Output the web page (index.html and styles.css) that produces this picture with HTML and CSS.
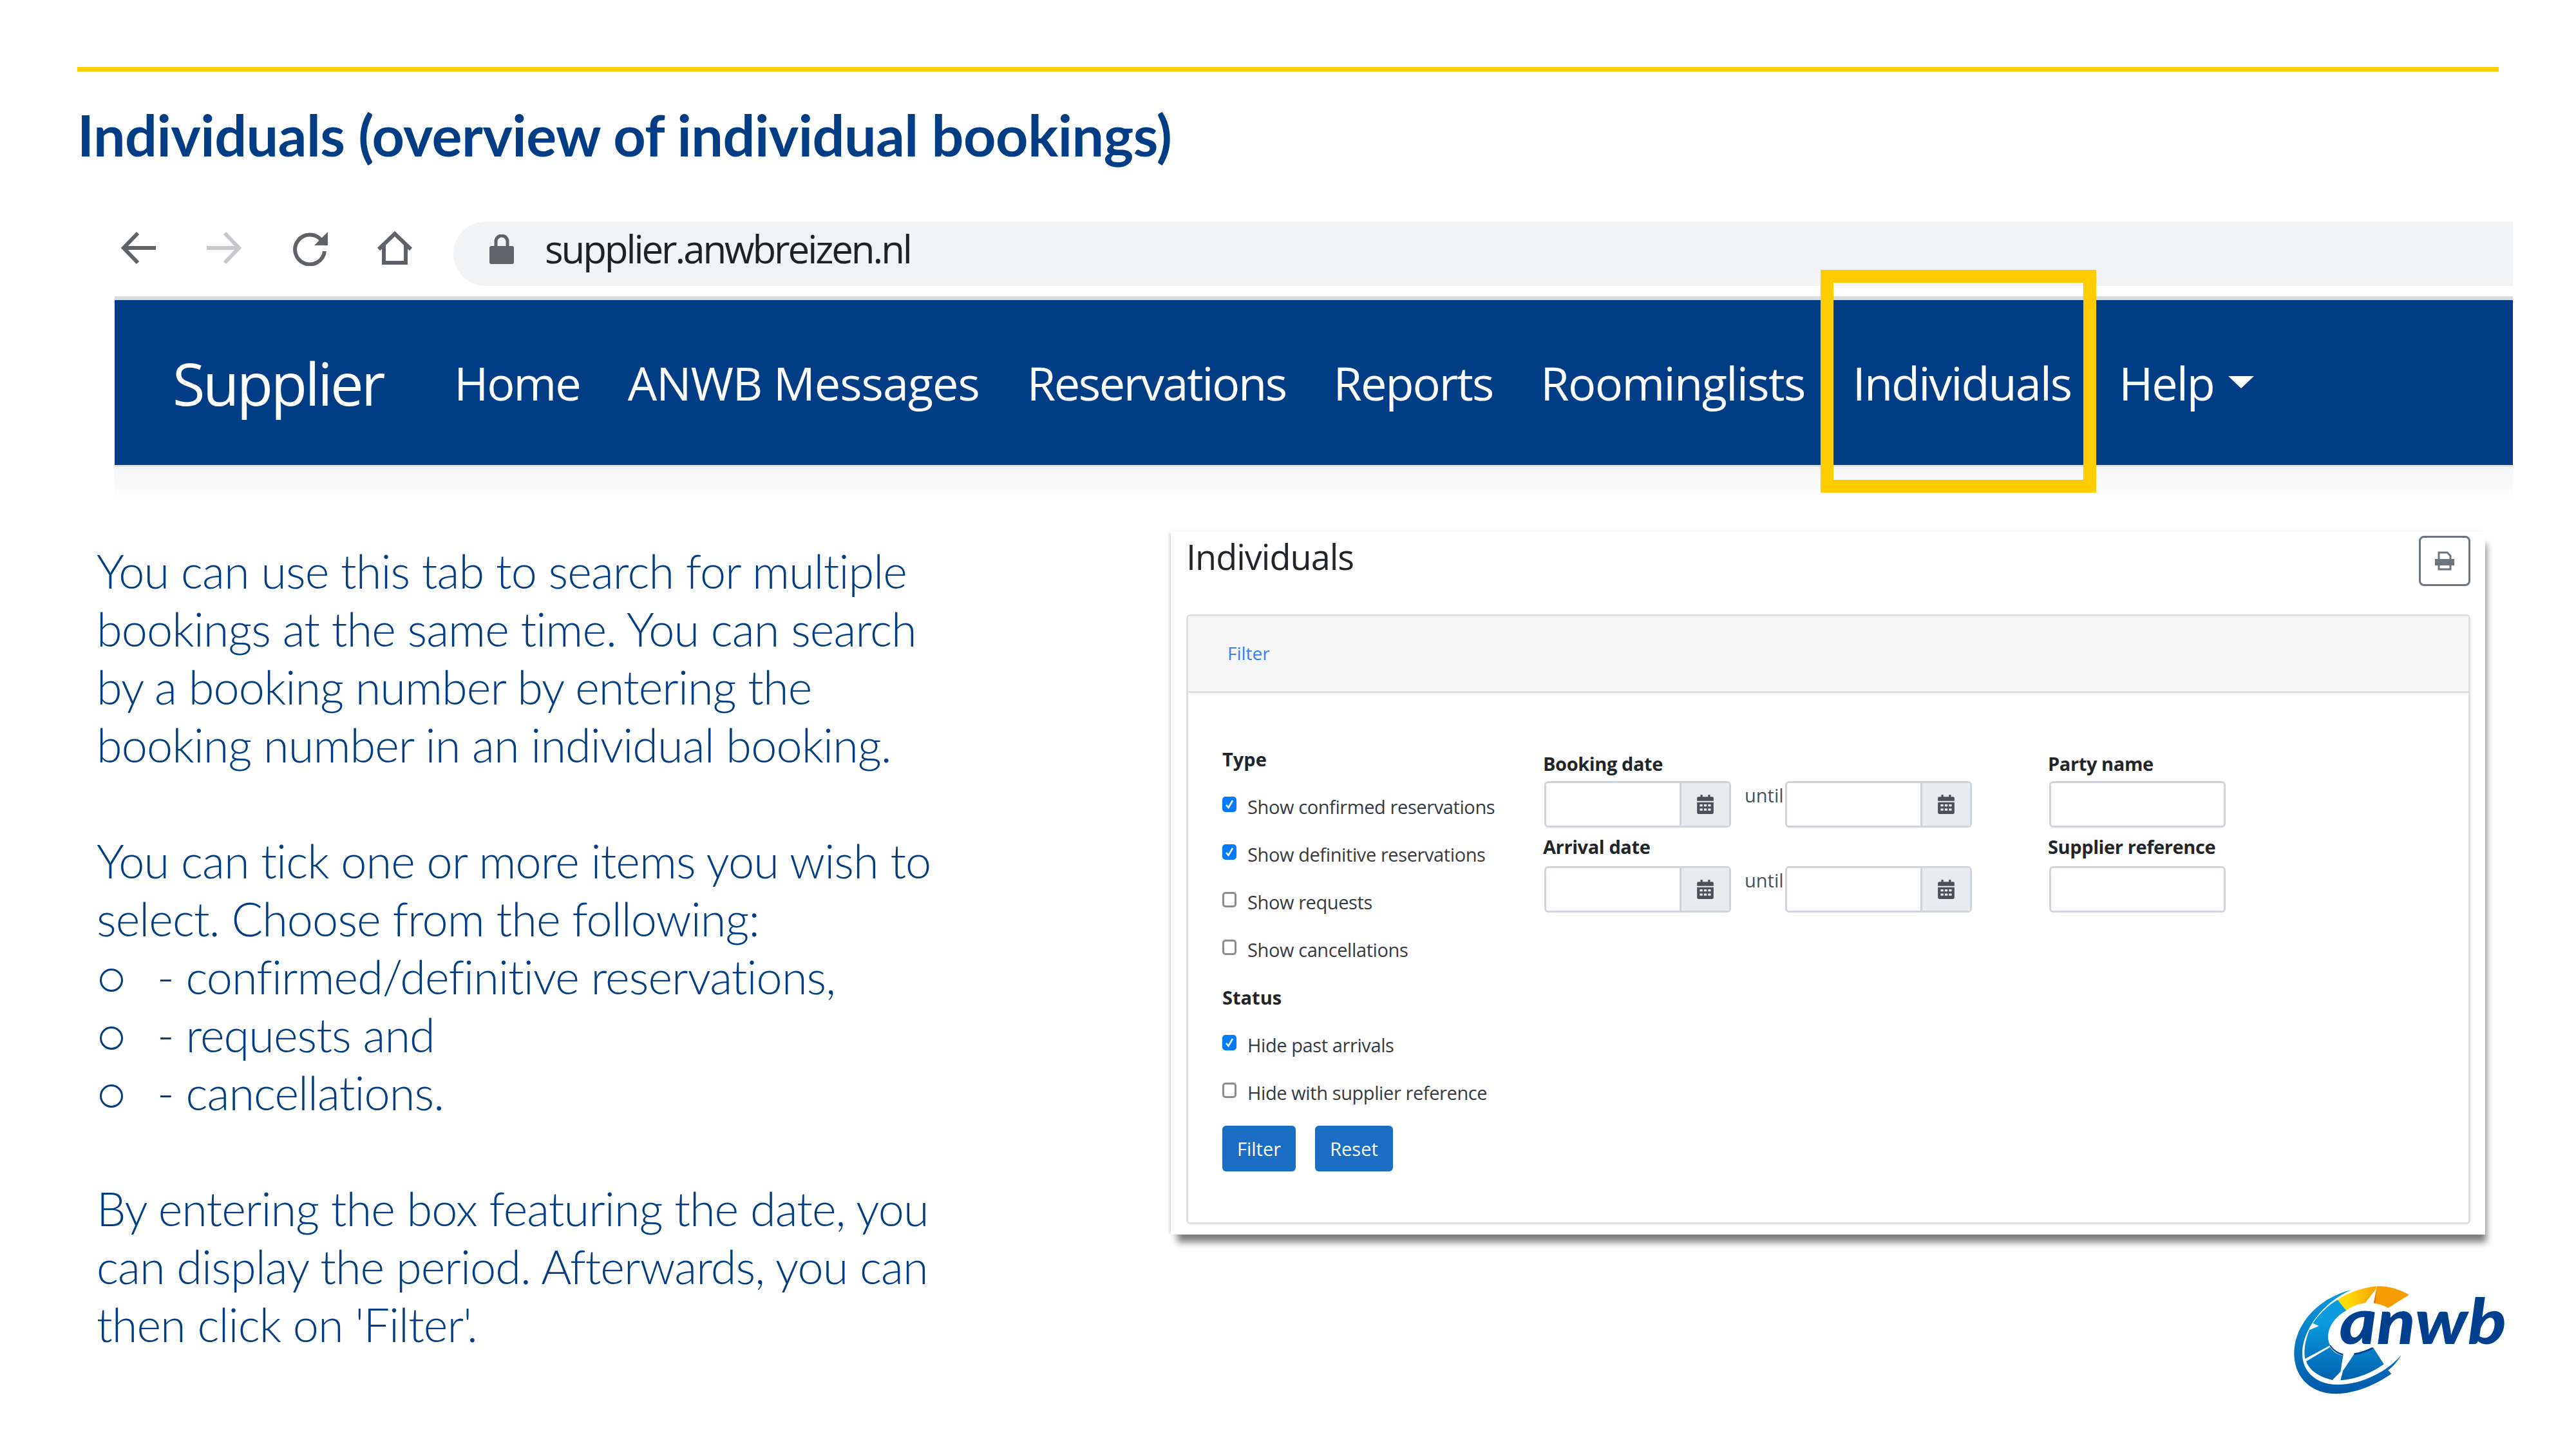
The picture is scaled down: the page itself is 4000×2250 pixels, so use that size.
FILE: index.html
```html
<!DOCTYPE html>
<html lang="en">
<head>
  <meta charset="UTF-8" />
  <title>Individuals</title>
  <link rel="stylesheet" href="styles.css">
</head>
<body>
<div class="slide">
  <div class="rule"></div>
  <h1 class="title">Individuals (overview of individual bookings)</h1>

  <div class="browser">
    <svg class="tool tool-back" viewBox="0 0 56 52"><path d="M54 26H6M26 3L4 26l22 23"/></svg>
    <svg class="tool tool-forward" viewBox="0 0 56 52"><path d="M2 26h48M30 3l22 23-22 23"/></svg>
    <svg class="tool tool-reload" viewBox="0 0 58 56"><path d="M47 16A23 23 0 1 0 52 33"/><path class="solid" d="M57 3v21H36z"/></svg>
    <svg class="tool tool-home" viewBox="0 0 56 52"><path d="M3 28L28 4l25 24M11 22v27h34V22"/></svg>
    <div class="address">
      <svg class="lock" viewBox="0 0 38 46"><path class="lock-body" d="M3 18h32a3 3 0 0 1 3 3v22a3 3 0 0 1-3 3H3a3 3 0 0 1-3-3V21a3 3 0 0 1 3-3z"/><path class="lock-loop" d="M10 19v-8a9 9 0 0 1 18 0v8"/></svg>
      <span class="url">supplier.anwbreizen.nl</span>
    </div>
  </div>

  <nav class="navbar">
    <span class="brand">Supplier</span>
    <a class="nav-link">Home</a>
    <a class="nav-link nav-messages">ANWB Messages</a>
    <a class="nav-link nav-reservations">Reservations</a>
    <a class="nav-link">Reports</a>
    <a class="nav-link nav-rooming">Roominglists</a>
    <a class="nav-link nav-current">Individuals<span class="highlight"></span></a>
    <a class="nav-link">Help<span class="caret"></span></a>
  </nav>
  <div class="nav-shadow"></div>

  <div class="content">
    <div class="copy">
      <p>You can use this tab to search for multiple<br>bookings at the same time. You can search<br>by a booking number by entering the<br>booking number in an individual booking.</p>
      <p>You can tick one or more items you wish to<br>select. Choose from the following:</p>
      <ul>
        <li>- confirmed/definitive reservations,</li>
        <li>- requests and</li>
        <li>- cancellations.</li>
      </ul>
      <p>By entering the box featuring the date, you<br>can display the period. Afterwards, you can<br>then click on 'Filter'.</p>
    </div>

    <section class="panel">
      <div class="panel-head">
        <h2>Individuals</h2>
        <button class="print-btn">
          <svg viewBox="0 0 30 30"><path d="M6 13V2h13l5 5v6"/><path class="solid" d="M0 12h30v10H0z"/><path d="M6 20v8h18v-8"/></svg>
        </button>
      </div>
      <div class="card">
        <div class="card-header"><a>Filter</a></div>
        <div class="card-body">
          <div class="col-checks">
            <h3 class="group-title">Type</h3>
            <label class="check"><input type="checkbox" checked>Show confirmed reservations</label>
            <label class="check"><input type="checkbox" checked>Show definitive reservations</label>
            <label class="check"><input type="checkbox">Show requests</label>
            <label class="check"><input type="checkbox">Show cancellations</label>
            <h3 class="group-title">Status</h3>
            <label class="check"><input type="checkbox" checked>Hide past arrivals</label>
            <label class="check"><input type="checkbox">Hide with supplier reference</label>
            <div class="buttons">
              <button class="btn btn-filter">Filter</button>
              <button class="btn btn-reset">Reset</button>
            </div>
          </div>

          <div class="col-dates">
            <label class="field-label">Booking date</label>
            <div class="date-row">
              <div class="date-input"><span class="cal"><svg viewBox="0 0 24 28"><path d="M5 0h3v4H5zM16 0h3v4h-3z"/><path fill-rule="evenodd" d="M2 3h20a2 2 0 0 1 2 2v4H0V5a2 2 0 0 1 2-2zM0 11h24v15a2 2 0 0 1-2 2H2a2 2 0 0 1-2-2zm4 3v3h4v-3zm6 0v3h4v-3zm6 0v3h4v-3zM4 20v3h4v-3zm6 0v3h4v-3zm6 0v3h4v-3z"/></svg></span></div>
              <span class="until">until</span>
              <div class="date-input"><span class="cal"><svg viewBox="0 0 24 28"><path d="M5 0h3v4H5zM16 0h3v4h-3z"/><path fill-rule="evenodd" d="M2 3h20a2 2 0 0 1 2 2v4H0V5a2 2 0 0 1 2-2zM0 11h24v15a2 2 0 0 1-2 2H2a2 2 0 0 1-2-2zm4 3v3h4v-3zm6 0v3h4v-3zm6 0v3h4v-3zM4 20v3h4v-3zm6 0v3h4v-3zm6 0v3h4v-3z"/></svg></span></div>
            </div>
            <label class="field-label">Arrival date</label>
            <div class="date-row">
              <div class="date-input"><span class="cal"><svg viewBox="0 0 24 28"><path d="M5 0h3v4H5zM16 0h3v4h-3z"/><path fill-rule="evenodd" d="M2 3h20a2 2 0 0 1 2 2v4H0V5a2 2 0 0 1 2-2zM0 11h24v15a2 2 0 0 1-2 2H2a2 2 0 0 1-2-2zm4 3v3h4v-3zm6 0v3h4v-3zm6 0v3h4v-3zM4 20v3h4v-3zm6 0v3h4v-3zm6 0v3h4v-3z"/></svg></span></div>
              <span class="until">until</span>
              <div class="date-input"><span class="cal"><svg viewBox="0 0 24 28"><path d="M5 0h3v4H5zM16 0h3v4h-3z"/><path fill-rule="evenodd" d="M2 3h20a2 2 0 0 1 2 2v4H0V5a2 2 0 0 1 2-2zM0 11h24v15a2 2 0 0 1-2 2H2a2 2 0 0 1-2-2zm4 3v3h4v-3zm6 0v3h4v-3zm6 0v3h4v-3zM4 20v3h4v-3zm6 0v3h4v-3zm6 0v3h4v-3z"/></svg></span></div>
            </div>
          </div>

          <div class="col-text">
            <label class="field-label">Party name</label>
            <div class="text-input"></div>
            <label class="field-label">Supplier reference</label>
            <div class="text-input"></div>
          </div>
        </div>
      </div>
    </section>
  </div>

  <svg class="logo" viewBox="0 0 1260 720">
    <defs>
      <linearGradient id="blueFade" x1="0" y1="0" x2="0" y2="1">
        <stop offset="0" stop-color="#0d9be0"/>
        <stop offset="1" stop-color="#0059a9"/>
      </linearGradient>
      <linearGradient id="segFade" gradientUnits="userSpaceOnUse" x1="0" y1="280" x2="0" y2="560">
        <stop offset="0" stop-color="#0a9ade"/>
        <stop offset="1" stop-color="#0060ad"/>
      </linearGradient>
      <linearGradient id="sunFade" gradientUnits="userSpaceOnUse" x1="400" y1="0" x2="570" y2="0">
        <stop offset="0.2" stop-color="#ffdc00"/>
        <stop offset="1" stop-color="#f7a000"/>
      </linearGradient>
    </defs>
    <path fill="url(#blueFade)" d="M455 128C300 165 185 290 187 430C190 550 280 615 385 613C470 612 570 570 640 520L625 503C650 485 670 460 686 432C620 510 500 572 385 570C290 568 225 510 225 425C225 310 330 180 455 128Z"/>
    <path fill="url(#segFade)" d="M390 175L430 225C385 250 350 290 345 340C344 355 348 375 355 387L238 450C230 410 240 360 258 316L302 297L274 284C305 240 345 200 390 175Z"/>
    <path fill="url(#segFade)" d="M243 462L355 395C370 420 392 430 415 435L403 510L365 549C310 535 262 510 243 462Z"/>
    <path fill="url(#segFade)" d="M403 550L415 505L465 430L555 397L605 475C550 515 480 545 403 550Z"/>
    <path fill="#00408f" d="M352 388C368 415 390 428 416 435L414 426C392 420 372 408 357 386ZM465 424C495 420 525 410 550 396L555 403C525 418 495 428 468 432Z"/>
    <path fill="url(#sunFade)" d="M390 175C440 140 510 118 570 112L568 125L518 190C485 195 455 205 430 225Z"/>
    <path fill="#f69c00" d="M572 112C620 108 680 125 722 152L625 213C605 203 585 195 558 190Z"/>
    <path fill="#e46f00" d="M558 190L570 130L566 191Z"/>
    <text class="logo-word" x="398" y="380" textLength="778" lengthAdjust="spacingAndGlyphs">anwb</text>
  </svg>
</div>
</body>
</html>
```

FILE: styles.css
```css
html, body {
  margin: 0;
  padding: 0;
  background: #fff;
}
.slide {
  position: relative;
  width: 4000px;
  height: 2250px;
  overflow: hidden;
  font-family: "Open Sans", sans-serif;
}
.rule {
  height: 7px;
  margin: 104px 120px 0;
  background: #ffcc00;
}
.title {
  margin: 42px 0 0 120px;
  height: 120px;
  font-family: Lato, sans-serif;
  font-size: 88px;
  line-height: 112px;
  font-weight: 700;
  color: #003d85;
  letter-spacing: -0.5px;
}

/* browser bar */
.browser {
  display: flex;
  align-items: center;
  height: 100px;
  margin: 71px 98px 0 178px;
}
.tool {
  flex: none;
  width: 56px;
  height: 52px;
  margin-bottom: 18px;
  fill: none;
  stroke: #5f6368;
  stroke-width: 6;
}
.tool .solid {
  fill: #5f6368;
  stroke: none;
}
.tool-back { margin-left: 10px; }
.tool-forward { margin-left: 75px; stroke: #c6c8cb; }
.tool-reload { margin-left: 77px; width: 58px; height: 56px; }
.tool-home { margin-left: 75px; }
.address {
  flex: 1;
  display: flex;
  align-items: center;
  height: 100px;
  margin-left: 63px;
  padding-left: 56px;
  background: #f1f3f4;
  border-radius: 50px 0 0 50px;
}
.lock {
  width: 38px;
  height: 46px;
  margin-bottom: 14px;
}
.lock-body { fill: #5f6368; }
.lock-loop { fill: none; stroke: #5f6368; stroke-width: 5; }
.url {
  margin-left: 48px;
  margin-bottom: 16px;
  font-size: 60px;
  color: #202124;
  font-weight: 400;
  letter-spacing: -3.1px;
}

/* navbar */
.navbar {
  display: flex;
  align-items: center;
  gap: 74px;
  height: 256px;
  margin: 16px 98px 0 178px;
  padding-left: 90px;
  background: #003d85;
  border-top: 6px solid #d8dadd;
  color: #fff;
}
.brand {
  margin-right: 36px;
  font-size: 92px;
  font-weight: 400;
  letter-spacing: -3.5px;
}
.nav-link {
  position: relative;
  font-size: 72px;
  font-weight: 400;
  letter-spacing: -2px;
}
.nav-messages { letter-spacing: -1px; }
.nav-reservations { letter-spacing: -2.4px; }
.nav-rooming { letter-spacing: -1.6px; }
.highlight {
  position: absolute;
  left: -50px;
  right: -39px;
  top: -126px;
  bottom: -122px;
  border: 20px solid #ffcc00;
}
.caret {
  display: inline-block;
  margin-left: 22px;
  vertical-align: 19px;
  border-top: 19px solid #fff;
  border-left: 20px solid transparent;
  border-right: 20px solid transparent;
}
.nav-shadow {
  height: 55px;
  margin: 0 98px 0 178px;
  border-top: 3px solid #dee2e6;
  background: linear-gradient(#f4f5f6, #fff);
}

/* left copy */
.content {
  display: flex;
  align-items: flex-start;
}
.copy {
  width: 1818px;
  margin-top: 61px;
  padding-left: 150px;
  box-sizing: border-box;
  font-family: Lato, sans-serif;
  font-weight: 300;
  font-size: 72px;
  letter-spacing: -0.9px;
  line-height: 90px;
  color: #003d85;
}
.copy p {
  margin: 0 0 90px;
}
.copy p:nth-child(2) {
  margin: 0;
}
.copy ul {
  margin: 0 0 90px;
  padding: 0;
  list-style: none;
}
.copy li {
  display: flex;
  align-items: center;
}
.copy li::before {
  content: "";
  flex: none;
  width: 36px;
  height: 36px;
  margin: 12px 53px 0 5px;
  border: 3px solid #003d85;
  border-radius: 50%;
  box-sizing: border-box;
}

/* filter panel */
.panel {
  width: 2041px;
  height: 1092px;
  margin-top: 45px;
  background: #fff;
  box-shadow: 6px 16px 10px -4px rgba(0, 0, 0, 0.5), -3px 0 5px -2px rgba(0, 0, 0, 0.25);
  font-family: "Open Sans", sans-serif;
  color: #212529;
  box-sizing: border-box;
  padding: 0 23px 16px 24px;
}
.panel-head {
  display: flex;
  justify-content: space-between;
  height: 129px;
  padding-top: 2px;
  box-sizing: border-box;
}
.panel-head h2 {
  margin: 0;
  font-size: 54px;
  line-height: 74px;
  font-weight: 400;
  letter-spacing: -1px;
}
.print-btn {
  width: 80px;
  height: 78px;
  margin-top: 5px;
  padding: 0;
  background: #fff;
  border: 3px solid #6c757d;
  border-radius: 8px;
}
.print-btn svg {
  display: block;
  width: 30px;
  height: 30px;
  margin: auto;
  fill: none;
  stroke: #6c757d;
  stroke-width: 3;
}
.print-btn .solid {
  fill: #6c757d;
  stroke: none;
}
.card {
  height: 947px;
  border: 3px solid #dfdfdf;
  border-radius: 6px;
  box-sizing: border-box;
}
.card-header {
  height: 116px;
  padding-left: 61px;
  background: #f7f7f7;
  border-bottom: 3px solid #dfdfdf;
  font-size: 28px;
  line-height: 115px;
  color: #2f80ff;
}
.card-body {
  display: flex;
  padding: 83px 0 0 53px;
}
.check {
  display: flex;
  align-items: center;
  height: 74px;
  font-size: 29px;
  color: #343a40;
  letter-spacing: -0.4px;
}
.check input {
  appearance: none;
  flex: none;
  width: 22px;
  height: 24px;
  margin: 0 17px 6px 0;
  background: #fff center / 100% no-repeat;
  border: 3px solid #8c8c8c;
  border-radius: 5px;
  box-sizing: border-box;
}
.check input:checked {
  border-color: #007bff;
  background-color: #007bff;
  background-image: url("data:image/svg+xml,%3Csvg xmlns='http://www.w3.org/2000/svg' viewBox='0 0 16 18'%3E%3Cpath d='M3 10l3.5 4L13 3' fill='none' stroke='%23fff' stroke-width='2.6'/%3E%3C/svg%3E");
}
.group-title {
  margin: 0;
  height: 56px;
  font-size: 29px;
  line-height: 40px;
  font-weight: 700;
}
.check + .group-title {
  padding-top: 18px;
}
.col-checks {
  width: 498px;
  flex: none;
}
.buttons {
  display: flex;
  gap: 30px;
  margin-top: 15px;
}
.btn {
  height: 71px;
  padding: 0;
  border: 0;
  border-radius: 6px;
  background: #1a6dc2;
  color: #fff;
  font-family: inherit;
  font-size: 29px;
}
.btn-filter { width: 114px; }
.btn-reset { width: 121px; }
.field-label {
  display: block;
  height: 40px;
  font-size: 29px;
  line-height: 40px;
  font-weight: 700;
  letter-spacing: -0.4px;
  color: #212529;
}
.col-dates {
  width: 784px;
  flex: none;
  padding-top: 7px;
}
.date-row {
  display: flex;
  height: 72px;
  margin: 7px 0 13px 2px;
}
.date-row + .field-label {
  height: 30px;
  line-height: 34px;
  margin-bottom: 17px;
}
.date-input {
  width: 290px;
  height: 72px;
  display: flex;
  justify-content: flex-end;
  border: 3px solid #ced4da;
  border-radius: 6px;
  box-sizing: border-box;
}
.cal {
  width: 74px;
  display: flex;
  align-items: center;
  justify-content: center;
  background: #e9ecef;
  border-left: 3px solid #ced4da;
}
.cal svg {
  width: 26px;
  height: 30px;
  fill: #495057;
}
.until {
  width: 84px;
  padding-left: 21px;
  box-sizing: border-box;
  font-size: 29px;
  line-height: 44px;
  color: #495057;
}
.col-text {
  padding-top: 7px;
}
.text-input {
  width: 274px;
  height: 72px;
  margin: 7px 0 13px 2px;
  border: 3px solid #ced4da;
  border-radius: 6px;
  box-sizing: border-box;
}
.text-input + .field-label {
  height: 30px;
  line-height: 34px;
  margin-bottom: 17px;
}

/* logo sits in the slide corner */
.logo {
  position: absolute;
  left: 3500px;
  top: 1960px;
  width: 420px;
  height: 240px;
}
.logo-word {
  font-family: Lato, sans-serif;
  font-style: italic;
  font-weight: 900;
  font-size: 290px;
  fill: #00408f;
}
```
